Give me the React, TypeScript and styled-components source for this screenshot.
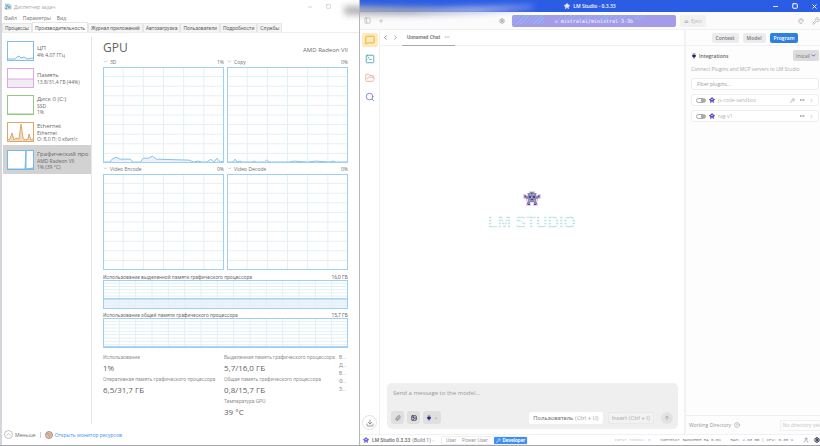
import React from "react";
import styled, { createGlobalStyle } from "styled-components";
import {
  ArrowUp,
  ChevronDown,
  ChevronLeft,
  ChevronRight,
  ChevronUp,
  CircleHelp,
  Download,
  Ellipsis,
  FolderOpen,
  Image as ImageIcon,
  MessageSquare,
  Minus,
  Palette,
  PanelLeft,
  Paperclip,
  Plug,
  Plus,
  Search,
  Settings,
  Square,
  SquareTerminal,
  User,
  Wrench,
  X,
} from "lucide-react";

const GlobalStyle = createGlobalStyle`
  * { box-sizing: border-box; }
  body { margin: 0; background: #fff; font-family: "Open Sans", "Noto Sans", sans-serif; }
  button, input { font-family: inherit; margin: 0; padding: 0; border: 0; background: none; color: inherit; }
  h1, h2, p, dl, dd, ul { margin: 0; padding: 0; font-weight: 400; }
  svg { display: block; flex: none; }
`;

const Desktop = styled.div`
  position: relative;
  display: grid;
  grid-template-columns: minmax(0, 359fr) minmax(0, 461fr);
  height: 100vh;
  overflow: hidden;
  border-bottom: 1px solid #a4a6ac;
`;

/* ---------- Task manager ---------- */

const TaskWindow = styled.section`
  display: flex;
  flex-direction: column;
  min-width: 0;
  border-left: 2px solid #d3d6da;
  color: #6e6e6e;
  font-size: 5px;
  line-height: 6px;
`;

const TaskTitle = styled.header`
  display: flex;
  align-items: center;
  gap: 2px;
  height: 13px;
  padding-left: 2px;
  color: #a5a5a5;
`;

const TaskWindowButtons = styled.div`
  display: flex;
  gap: 13px;
  margin-left: auto;
  padding-right: 28px;
`;

const MenuBar = styled.nav`
  display: flex;
  gap: 6px;
  height: 10px;
  padding-left: 2px;
  align-items: center;
`;

const PlainButton = styled.button`
  display: flex;
  align-items: center;
  gap: 2px;
  font-size: 5px;
  line-height: 6px;
`;

const TaskTabs = styled.div`
  display: flex;
  align-items: flex-end;
  height: 10px;
  border-bottom: 1px solid #ececec;
`;

const TaskTab = styled.button<{ $active?: boolean }>`
  height: ${(p) => (p.$active ? 10 : 9)}px;
  padding: 0 2px;
  border: 1px solid #e6e6e6;
  border-bottom: 0;
  background: ${(p) => (p.$active ? "#fff" : "#f4f4f4")};
  color: #606060;
  font-family: Roboto, sans-serif;
  font-size: 5px;
  line-height: 6px;
  white-space: nowrap;
`;

const TaskBody = styled.div`
  display: flex;
  flex: 1;
  min-height: 0;
`;

const DeviceList = styled.div`
  display: flex;
  flex-direction: column;
  flex: none;
  width: 90px;
  margin: 4px 0 0;
  border-right: 1px solid #e6e6e6;
`;

const DeviceRow = styled.button<{ $active?: boolean }>`
  display: flex;
  align-items: center;
  gap: 3px;
  height: ${(p) => (p.$active ? 29 : 27)}px;
  padding-left: 4px;
  margin-left: 1px;
  background: ${(p) => (p.$active ? "#d2d2d2" : "transparent")};
  color: #666;
  text-align: left;
  white-space: nowrap;
`;

const DeviceName = styled.div`
  font-size: 6px;
  line-height: 8px;
`;

const DeviceMeta = styled.div`
  font-size: 5px;
  line-height: 6px;
`;

const GpuPane = styled.main`
  flex: 1;
  min-width: 0;
  padding: 7px 11px 0 11px;
`;

const GpuHeader = styled.div`
  display: flex;
  justify-content: space-between;
  align-items: center;
  height: 16px;
`;

const GpuTitle = styled.h1`
  font-size: 12px;
  line-height: 16px;
  color: #626262;
`;

const GpuModel = styled.span`
  font-size: 6px;
  line-height: 8px;
  padding-top: 4px;
`;

const ChartGrid = styled.div`
  display: grid;
  grid-template-columns: 1fr 1fr;
  column-gap: 3px;
`;

const ChartLabel = styled.div`
  display: flex;
  justify-content: space-between;
  align-items: center;
  height: 11px;
  white-space: nowrap;
`;

const MemoryLabel = styled(ChartLabel)`
  height: 9px;
  padding-top: 2px;
  font-family: Roboto, sans-serif;
`;

const MemorySection = styled.div`
  padding-top: 1px;
`;

const ChartSvg = styled.svg<{ $height: number }>`
  width: 100%;
  height: ${(p) => p.$height}px;
`;

const Stats = styled.dl`
  display: grid;
  grid-template-columns: 117px 111px 1fr;
  column-gap: 4px;
  padding-top: 5px;
  white-space: nowrap;
`;

const StatColumn = styled.div`
  min-width: 0;
`;

const StatLabel = styled.dt`
  color: #929292;
  font-family: Roboto, sans-serif;
  line-height: 8px;
`;

const StatValue = styled.dd`
  font-size: 8px;
  line-height: 14px;
  color: #606060;
`;

const TaskFooter = styled.footer`
  display: flex;
  align-items: center;
  gap: 4px;
  height: 21px;
  padding-left: 2px;
`;

const Divider = styled.span`
  width: 1px;
  height: 6px;
  background: #ccc;
`;

const MonitorLink = styled.a`
  display: flex;
  align-items: center;
  gap: 2px;
  color: #3e8ef0;
  text-decoration: none;
`;

interface ChartProps {
  height: number;
  cols: number;
  rows: number;
  color?: string;
  line?: string;
  area?: string;
  fill?: string;
}

function Chart({ height, cols, rows, color = "#9fd0f2", line, area, fill = "#edf3fa" }: ChartProps) {
  const xs = Array.from({ length: cols - 1 }, (_, i) => ((i + 1) * 120) / cols);
  const ys = Array.from({ length: rows - 1 }, (_, i) => ((i + 1) * 100) / rows);
  return (
    <ChartSvg $height={height} viewBox="0 0 120 100" preserveAspectRatio="none" aria-hidden="true">
      <rect width="120" height="100" fill="#fff" />
      {area && <path d={area} fill={fill} />}
      <g stroke="#e3f0f6" strokeWidth="1">
        {xs.map((x) => <line key={`x${x}`} x1={x} x2={x} y1="0" y2="100" vectorEffect="non-scaling-stroke" />)}
        {ys.map((y) => <line key={`y${y}`} x1="0" x2="120" y1={y} y2={y} vectorEffect="non-scaling-stroke" />)}
      </g>
      {line && <path d={line} fill="none" stroke="#86c2ea" strokeWidth="1" vectorEffect="non-scaling-stroke" />}
      <rect width="120" height="100" fill="none" stroke={color} strokeWidth="2" vectorEffect="non-scaling-stroke" />
    </ChartSvg>
  );
}

const load3d =
  "M0 99 L7 99 L9 96 L13 94 L17 96 L27 96 L30 99 L37 99 L40 95 L45 95 L49 93 L53 96 L85 97 L90 99 L94 98 L98 99 L103 99 L107 96 L110 99 L113 95 L116 99 L120 98";
const loadCopy =
  "M0 99 L6 99 L8 96 L10 99 L13 98 L15 99 L25 99 L27 98 L29 99 L37 99 L39 97 L42 99 L62 99 L66 98 L80 99 L88 98 L102 99 L105 98 L108 99 L120 99";

interface Device {
  name: string;
  meta: string[];
  color: string;
  fill: string;
  path: string;
  active?: boolean;
}

const devices: Device[] = [
  { name: "ЦП", meta: ["4% 4,07 ГГц"], color: "#7fbfe8", fill: "#edf6fc", path: "M0 18 L8 18 L10 16 L12 15 L14 17 L17 16 L20 18 L26 17" },
  { name: "Память", meta: ["13,8/31,4 ГБ (44%)"], color: "#dfa5e8", fill: "#f0ecf1", path: "M0 11 L26 11" },
  { name: "Диск 0 (C:)", meta: ["SSD", "1%"], color: "#93c983", fill: "#eef7ea", path: "M0 19 L26 19" },
  {
    name: "Ethernet",
    meta: ["Ethernet", "О: 8,0 П: 0 кбит/с"],
    color: "#dca66f",
    fill: "#f3d9bd",
    path: "M0 18 L3 17 L5 11 L7 18 L9 16 L12 17 L14 2 L16 16 L18 18 L21 17 L22 12 L24 18 L26 17",
  },
  {
    name: "Графический про",
    meta: ["AMD Radeon VII", "1% (39 °C)"],
    color: "#74b8e8",
    fill: "#9fcdf0",
    path: "M0 19 L18 19 L19 1 L19 19 L26 18",
    active: true,
  },
];

function Thumb({ color, fill, path }: Device) {
  return (
    <svg width="27" height="20" viewBox="0 0 27 20" aria-hidden="true">
      <rect width="27" height="20" fill="#fff" />
      <path d={`${path} V20 H0 Z`} fill={fill} />
      <path d={path} fill="none" stroke={color} />
      <rect x=".5" y=".5" width="26" height="19" fill="none" stroke={color} />
    </svg>
  );
}

const taskTabs = ["Процессы", "Производительность", "Журнал приложений", "Автозагрузка", "Пользователи", "Подробности", "Службы"];

function GaugeIcon() {
  return (
    <svg width="8" height="8" viewBox="0 0 16 16" aria-hidden="true">
      <circle cx="8" cy="8" r="7" fill="#e7c3ad" stroke="#8d7a78" strokeWidth="1.5" />
      <path d="M3 4 L10 12 M7 4 L12 9" stroke="#b0796a" strokeWidth="1.5" />
    </svg>
  );
}

function TaskManagerIcon() {
  return (
    <svg width="8" height="7" viewBox="0 0 16 14" aria-hidden="true">
      <path d="M2 2h9l3 3v7H5z" fill="#b8dcea" stroke="#8daab8" />
      <path d="M4 9l3-5 3 6 3-4" fill="none" stroke="#4e93b8" strokeWidth="1.5" />
      <path d="M1 10l5 3" stroke="#878787" strokeWidth="2" />
    </svg>
  );
}

function EngineLabel({ name, value }: { name: string; value: string }) {
  return (
    <ChartLabel>
      <PlainButton><ChevronDown size={5} color="#888" />{name}</PlainButton>
      <span>{value}</span>
    </ChartLabel>
  );
}

function TaskManager() {
  return (
    <TaskWindow>
      <TaskTitle>
        <TaskManagerIcon />
        <span>Диспетчер задач</span>
        <TaskWindowButtons>
          <button aria-label="Свернуть"><Minus size={6} /></button>
          <button aria-label="Развернуть"><Square size={5} /></button>
        </TaskWindowButtons>
      </TaskTitle>
      <MenuBar>
        <PlainButton>Файл</PlainButton>
        <PlainButton>Параметры</PlainButton>
        <PlainButton>Вид</PlainButton>
      </MenuBar>
      <TaskTabs>
        {taskTabs.map((t, i) => <TaskTab key={t} $active={i === 1}>{t}</TaskTab>)}
      </TaskTabs>
      <TaskBody>
        <DeviceList>
          {devices.map((d) => (
            <DeviceRow key={d.name} $active={d.active}>
              <Thumb {...d} />
              <div>
                <DeviceName>{d.name}</DeviceName>
                {d.meta.map((m) => <DeviceMeta key={m}>{m}</DeviceMeta>)}
              </div>
            </DeviceRow>
          ))}
        </DeviceList>
        <GpuPane>
          <GpuHeader>
            <GpuTitle>GPU</GpuTitle>
            <GpuModel>AMD Radeon VII</GpuModel>
          </GpuHeader>
          <ChartGrid>
            <div>
              <EngineLabel name="3D" value="1%" />
              <Chart height={96} cols={6} rows={10} line={load3d} area={`${load3d} V100 H0 Z`} />
            </div>
            <div>
              <EngineLabel name="Copy" value="0%" />
              <Chart height={96} cols={6} rows={10} line={loadCopy} area={`${loadCopy} V100 H0 Z`} />
            </div>
            <div>
              <EngineLabel name="Video Encode" value="0%" />
              <Chart height={96} cols={6} rows={10} />
            </div>
            <div>
              <EngineLabel name="Video Decode" value="0%" />
              <Chart height={96} cols={6} rows={10} />
            </div>
          </ChartGrid>
          <MemorySection>
            <MemoryLabel><span>Использование выделенной памяти графического процессора</span><span>16,0 ГБ</span></MemoryLabel>
            <Chart height={29} cols={15} rows={9} line="M0 65 H120" area="M0 65 H120 V100 H0 Z" />
            <MemoryLabel><span>Использование общей памяти графического процессора</span><span>15,7 ГБ</span></MemoryLabel>
            <Chart height={30} cols={15} rows={9} line="M0 96 H120" />
          </MemorySection>
          <Stats>
            <StatColumn>
              <StatLabel>Использование</StatLabel>
              <StatValue>1%</StatValue>
              <StatLabel>Оперативная память графического процессора</StatLabel>
              <StatValue>6,5/31,7 ГБ</StatValue>
            </StatColumn>
            <StatColumn>
              <StatLabel>Выделенная память графического процессора</StatLabel>
              <StatValue>5,7/16,0 ГБ</StatValue>
              <StatLabel>Общая память графического процессора</StatLabel>
              <StatValue>0,8/15,7 ГБ</StatValue>
              <StatLabel>Температура GPU</StatLabel>
              <StatValue>39 °C</StatValue>
            </StatColumn>
            <StatColumn>
              {["В...", "Д...", "В...", "Ф...", "З..."].map((t, i) => <StatLabel key={i}>{t}</StatLabel>)}
            </StatColumn>
          </Stats>
        </GpuPane>
      </TaskBody>
      <TaskFooter>
        <PlainButton>
          <svg width="9" height="9" viewBox="0 0 18 18" fill="none" stroke="#888" aria-hidden="true">
            <circle cx="9" cy="9" r="8" /><path d="M5 11l4-4 4 4" />
          </svg>
          Меньше
        </PlainButton>
        <Divider />
        <MonitorLink href="#"><GaugeIcon />Открыть монитор ресурсов</MonitorLink>
      </TaskFooter>
    </TaskWindow>
  );
}

/* ---------- LM Studio ---------- */

const StudioWindow = styled.section`
  display: flex;
  flex-direction: column;
  min-width: 0;
  border-left: 1px solid #b5b6bb;
  font-size: 5px;
  line-height: 6px;
  color: #777;
`;

const StudioTitle = styled.header`
  display: grid;
  grid-template-columns: 1fr auto 1fr;
  align-items: center;
  height: 12px;
  background: #2b5de4;
  color: #fff;
  font-weight: 600;
`;

const TitleName = styled.div`
  display: flex;
  align-items: center;
  gap: 3px;
`;

const WindowControls = styled.div`
  display: flex;
  justify-content: flex-end;
  gap: 13px;
  padding-right: 2px;
`;

const Toolbar = styled.div`
  display: flex;
  align-items: center;
  height: 18px;
  padding-left: 4px;
  background: #fbfbfb;
  border-bottom: 1px solid #f0f0f0;
  color: #aaa;
`;

const IconGroup = styled.div<{ $gap?: number; $push?: boolean }>`
  display: flex;
  align-items: center;
  gap: ${(p) => p.$gap ?? 4}px;
  margin-left: ${(p) => (p.$push ? "auto" : "0")};
`;

const ToolbarEnd = styled.div`
  display: flex;
  flex: 0 0 25%;
  align-items: center;
  justify-content: flex-end;
  gap: 8px;
`;

const ModelPicker = styled.button`
  flex: 0 0 36%;
  height: 12px;
  margin: 0 4px 0 7px;
  border-radius: 2px;
  background:
    repeating-linear-gradient(135deg, #8fb4ef 0 1px, transparent 1px 3px) 0 0 / 32px 9px no-repeat,
    repeating-linear-gradient(135deg, #93b2ee 0 1px, transparent 1px 3px) 46px 0 / 88px 5px no-repeat,
    #a59ce9;
  color: #fff;
  font: 5px/6px "DejaVu Sans Mono", monospace;
`;

const EjectButton = styled.button`
  display: flex;
  align-items: center;
  justify-content: center;
  gap: 2px;
  width: 26px;
  height: 12px;
  border-radius: 2px;
  background: #f1f1f1;
  color: #bbb;
  font-size: 5px;
`;

const StudioBody = styled.div`
  display: flex;
  flex: 1;
  min-height: 0;
`;

const Rail = styled.nav`
  display: flex;
  flex-direction: column;
  align-items: center;
  gap: 5px;
  width: 20px;
  padding: 3px 0 4px;
  border-right: 1px solid #efefef;
`;

const RailButton = styled.button<{ $active?: boolean }>`
  display: flex;
  align-items: center;
  justify-content: center;
  width: 16px;
  height: 14px;
  border-radius: 2px;
  background: ${(p) => (p.$active ? "#fdeabb" : "transparent")};
`;

const DownloadButton = styled.button`
  display: flex;
  align-items: center;
  justify-content: center;
  width: 15px;
  height: 15px;
  margin-top: auto;
  border: 1px solid #e2e2e2;
  border-radius: 50%;
  color: #666;
`;

const ChatPane = styled.main`
  display: flex;
  flex-direction: column;
  flex: 1;
  min-width: 0;
`;

const ChatTabs = styled.div`
  display: flex;
  align-items: center;
  gap: 3px;
  height: 16px;
  padding-left: 2px;
  border-bottom: 1px solid #f1f1f1;
  color: #777;
`;

const ChatTab = styled.button`
  display: flex;
  align-items: center;
  gap: 4px;
  height: 16px;
  padding: 0 5px;
  border-bottom: 1px solid #aaa;
  font-family: Roboto, sans-serif;
  font-size: 5px;
  font-weight: 600;
`;

const Hero = styled.div`
  display: flex;
  flex: 1;
  flex-direction: column;
  align-items: center;
  justify-content: center;
  gap: 8px;
  padding-bottom: 6px;
`;

const Wordmark = styled.div`
  font: 700 16px/18px "Liberation Sans", sans-serif;
  color: transparent;
  background: repeating-linear-gradient(180deg, #bfe0e6 0 1px, #eff8f9 1px 3px);
  background-clip: text;
`;

const Composer = styled.form`
  margin: 0 6px 5px 7px;
  padding: 6px 4px 5px;
  height: 46px;
  display: flex;
  flex-direction: column;
  justify-content: space-between;
  border-radius: 5px;
  background: #efefef;
`;

const MessageInput = styled.input`
  width: 100%;
  padding-left: 2px;
  outline: 0;
  font-size: 6px;
  line-height: 8px;
  &::placeholder { color: #999; opacity: 1; }
`;

const ComposerActions = styled.div`
  display: flex;
  align-items: center;
  gap: 3px;
`;

const ToolButton = styled.button`
  display: flex;
  align-items: center;
  justify-content: center;
  gap: 2px;
  min-width: 13px;
  height: 13px;
  padding: 0 3px;
  border-radius: 3px;
  background: #dfdfdf;
  color: #555;
`;

const RoleButton = styled.button<{ $muted?: boolean }>`
  height: 12px;
  padding: 0 3px;
  border: 1px solid ${(p) => (p.$muted ? "#e9e9e9" : "#fff")};
  border-radius: 2px;
  background: ${(p) => (p.$muted ? "#f2f2f2" : "#fff")};
  color: ${(p) => (p.$muted ? "#b3b3b3" : "#777")};
  font-family: Roboto, sans-serif;
  font-size: 6px;
  line-height: 8px;
  white-space: nowrap;
`;

const Shortcut = styled.span`
  color: #b0b0b0;
`;

const SendButton = styled.button`
  display: flex;
  align-items: center;
  justify-content: center;
  width: 12px;
  height: 12px;
  margin: 0 1px 0 2px;
  border-radius: 50%;
  background: #e2e2e2;
  color: #888;
`;

const SidePanel = styled.aside`
  display: flex;
  flex-direction: column;
  width: 30%;
  max-width: 136px;
  border-left: 2px solid #f2f2f2;
  background: #fdfdfd;
`;

const PanelTabs = styled.div`
  display: flex;
  align-items: center;
  justify-content: center;
  gap: 4px;
  height: 16px;
  padding-left: 4px;
  border-bottom: 1px solid #f2f2f2;
`;

const PanelTab = styled.button<{ $active?: boolean }>`
  height: 10px;
  padding: 0 4px;
  border-radius: 2px;
  background: ${(p) => (p.$active ? "#2e80df" : "#ececee")};
  color: ${(p) => (p.$active ? "#fff" : "#777")};
  font-size: 5px;
  line-height: 6px;
  font-weight: 600;
`;

const PanelContent = styled.div`
  display: flex;
  flex-direction: column;
  gap: 4px;
  padding: 4px 1px 0 5px;
`;

const PanelHeading = styled.div`
  display: flex;
  align-items: center;
  gap: 2px;
  color: #666;
`;

const Heading = styled.h2`
  font-size: 5px;
  line-height: 6px;
  font-weight: 600;
`;

const InstallButton = styled.button`
  display: flex;
  align-items: center;
  justify-content: space-between;
  width: 26px;
  height: 11px;
  margin-left: auto;
  padding: 0 3px;
  border-radius: 2px;
  background: #dcdcdc;
  color: #777;
  font-size: 5px;
`;

const PanelHint = styled.p`
  height: 9px;
  font-size: 5px;
  line-height: 9px;
  color: #aaa;
  white-space: nowrap;
`;

const FilterInput = styled.input`
  height: 12px;
  padding: 0 5px;
  border: 1px solid #ececec;
  border-radius: 3px;
  background: #fff;
  font-size: 5px;
  &::placeholder { color: #999; opacity: 1; }
`;

const PluginRow = styled.div`
  display: flex;
  align-items: center;
  gap: 4px;
  height: 12px;
  padding: 0 4px;
  border: 1px solid #efefef;
  border-radius: 3px;
  background: #fff;
  color: #b5b5b5;
`;

const PluginLabel = styled.label`
  display: flex;
  align-items: center;
  gap: 3px;
`;

const Toggle = styled.input`
  appearance: none;
  width: 10px;
  height: 5px;
  border: 1px solid #a9a9a9;
  border-radius: 3px;
  background: linear-gradient(90deg, #fff 50%, #a9a9a9 50%);
  &:checked { background: #2e80df; }
`;

const DirectoryBar = styled.div`
  display: flex;
  align-items: center;
  gap: 3px;
  height: 19px;
  margin-top: auto;
  padding-left: 3px;
  border-top: 1px solid #efefef;
  color: #999;
  white-space: nowrap;
`;

const DirectoryButton = styled.button`
  height: 11px;
  margin-left: auto;
  padding-left: 2px;
  border: 1px solid #f0f0f0;
  border-right: 0;
  color: #c4c4c4;
  font-size: 5px;
`;

const StatusBar = styled.footer`
  display: flex;
  align-items: center;
  height: 11px;
  padding: 0 0 0 3px;
  border-top: 1px solid #f1f1f1;
  font-family: Roboto, sans-serif;
  white-space: nowrap;
`;

const VersionName = styled.strong`
  margin: 0 2px 0 3px;
  font-weight: 600;
`;

const ModeGroup = styled.div`
  display: flex;
  align-items: center;
  gap: 6px;
  margin-left: 5px;
  padding-left: 4px;
  border: 1px solid #efefef;
  border-radius: 2px;
`;

const ModeButton = styled.button<{ $active?: boolean }>`
  height: 7px;
  padding: 0 ${(p) => (p.$active ? 2 : 0)}px;
  display: flex;
  align-items: center;
  gap: 2px;
  border-radius: 1px;
  background: ${(p) => (p.$active ? "#3b8ff2" : "transparent")};
  color: ${(p) => (p.$active ? "#fff" : "#999")};
  font-size: 5px;
  line-height: 6px;
  font-weight: ${(p) => (p.$active ? 600 : 400)};
`;

const StatusMetrics = styled.div`
  display: flex;
  align-items: center;
  gap: 10px;
  margin-left: auto;
  font-family: "Liberation Mono", monospace;
  font-size: 4px;
  color: #777;
`;

const FaintMetric = styled.span`
  color: #c4c4c4;
`;

const DragBlur = styled.div`
  position: absolute;
  inset: 0;
  filter: blur(3px);
  pointer-events: none;
`;

const DragShadow = styled.div`
  width: 23%;
  height: 9px;
  margin: 6px 0 0 42%;
  background: linear-gradient(90deg, #b4b5b8, #a3a8ba 35%, #b9bfe0 65%, #b8b8f2);
  clip-path: polygon(0 0, 50% 20%, 100% 0, 100% 20%, 70% 80%, 35% 100%, 0 100%);
`;

function RobotIcon({ size = 6, color = "#6a4fc0" }: { size?: number; color?: string }) {
  return (
    <svg width={size} height={size} viewBox="0 0 18 16" fill={color} aria-hidden="true">
      <path d="M7 0h4v2h2v2h3v2h2v3h-3v2h-1v2h1v3h-4v-3H7v3H3v-3h1v-2H3V9H0V6h2V4h3V2h2z" />
      <path d="M6 5h2v2H6zM10 5h2v2h-2z" fill="#fff" />
    </svg>
  );
}

function MascotIcon() {
  return (
    <svg width="18" height="15" viewBox="0 0 18 15" shapeRendering="crispEdges" aria-hidden="true">
      <path d="M6 0h6v2h2v2h1V3h3v5h-3v3h-1v1h1v3h-5v-3H8v3H3v-3h1v-1H3V8H0V3h3v1h1V2h2z" fill="#f0cdf2" />
      <path d="M7 1h4v1h2v3h2V4h2v3h-2v1h-2v3h1v3h-3v-3H7v3H4v-3h1V8H3V7H1V4h2v1h2V2h2z" fill="#8d8bab" />
      <path d="M6 5h2v2H6zM10 5h2v2h-2zM8 8h2v1H8zM5 13h2v1H5zM11 13h2v1h-2zM2 5h1v1H2zM15 5h1v1h-1zM8 2h1v1H8z" fill="#3d45a8" />
      <path d="M7 3h1v1H7zM10 3h1v1h-1zM8 6h1v1H8zM11 9h1v1h-1zM6 9h1v1H6z" fill="#b9b9cc" />
    </svg>
  );
}

function LmStudio() {
  return (
    <StudioWindow>
      <StudioTitle>
        <span />
        <TitleName><RobotIcon color="#e4dcff" />LM Studio - 0.3.33</TitleName>
        <WindowControls>
          <button aria-label="Minimize"><Minus size={7} strokeWidth={3} /></button>
          <button aria-label="Maximize"><Square size={6} strokeWidth={4} /></button>
          <button aria-label="Close"><X size={7} strokeWidth={3} /></button>
        </WindowControls>
      </StudioTitle>
      <Toolbar>
        <IconGroup $gap={7}>
          <button aria-label="Toggle sidebar"><PanelLeft size={7} /></button>
          <button aria-label="New chat"><Plus size={6} /></button>
        </IconGroup>
        <IconGroup $push>
          <button aria-label="Model settings"><Settings size={6} strokeWidth={4} /></button>
        </IconGroup>
        <ModelPicker>⌂ mistralai/ministral-3-3b</ModelPicker>
        <EjectButton>⏏ <span>Eject</span></EjectButton>
        <ToolbarEnd>
          <button aria-label="Theme"><Palette size={6} /></button>
          <button aria-label="Tools"><Wrench size={8} /></button>
        </ToolbarEnd>
      </Toolbar>
      <StudioBody>
        <Rail>
          <RailButton $active aria-label="Chat"><MessageSquare size={10} color="#e2a52a" /></RailButton>
          <RailButton aria-label="Developer"><SquareTerminal size={10} color="#3f9fae" /></RailButton>
          <RailButton aria-label="My models"><FolderOpen size={10} color="#f0a08c" /></RailButton>
          <RailButton aria-label="Discover"><Search size={10} color="#6c78d8" /></RailButton>
          <DownloadButton aria-label="Downloads"><Download size={8} /></DownloadButton>
        </Rail>
        <ChatPane>
          <ChatTabs>
            <button aria-label="Back"><ChevronLeft size={7} strokeWidth={3} /></button>
            <button aria-label="Forward"><ChevronRight size={7} /></button>
            <ChatTab>Unnamed Chat <Ellipsis size={6} color="#aaa" /></ChatTab>
          </ChatTabs>
          <Hero>
            <MascotIcon />
            <Wordmark>LM STUDIO</Wordmark>
          </Hero>
          <Composer onSubmit={(e) => e.preventDefault()}>
            <MessageInput aria-label="Message" placeholder="Send a message to the model..." />
            <ComposerActions>
              <ToolButton type="button" aria-label="Attach"><Paperclip size={6} /></ToolButton>
              <ToolButton type="button" aria-label="Image"><ImageIcon size={6} color="#222a55" strokeWidth={3} /></ToolButton>
              <ToolButton type="button" aria-label="Plugins"><Plug size={6} color="#252a80" fill="#252a80" /><ChevronUp size={4} /></ToolButton>
              <IconGroup $gap={5} $push>
                <RoleButton type="button">Пользователь <Shortcut>(Ctrl + U)</Shortcut></RoleButton>
                <RoleButton type="button" $muted>Insert (Ctrl + I)</RoleButton>
                <SendButton aria-label="Send"><ArrowUp size={6} /></SendButton>
              </IconGroup>
            </ComposerActions>
          </Composer>
        </ChatPane>
        <SidePanel>
          <PanelTabs>
            <PanelTab>Context</PanelTab>
            <PanelTab>Model</PanelTab>
            <PanelTab $active>Program</PanelTab>
          </PanelTabs>
          <PanelContent>
            <PanelHeading>
              <Plug size={6} color="#222a66" fill="#222a66" />
              <Heading>Integrations</Heading>
              <InstallButton>Install <ChevronDown size={5} color="#46509c" strokeWidth={4} /></InstallButton>
            </PanelHeading>
            <PanelHint>Connect Plugins and MCP servers to LM Studio</PanelHint>
            <FilterInput aria-label="Filter plugins" placeholder="Filter plugins..." />
            <PluginRow>
              <PluginLabel><Toggle type="checkbox" /><RobotIcon />js-code-sandbox</PluginLabel>
              <IconGroup $push>
                <Wrench size={5} color="#888" /><Ellipsis size={6} color="#666" /><ChevronRight size={5} color="#888" />
              </IconGroup>
            </PluginRow>
            <PluginRow>
              <PluginLabel><Toggle type="checkbox" /><RobotIcon />rag-v1</PluginLabel>
              <IconGroup $push><Ellipsis size={6} color="#666" /><ChevronRight size={5} color="#888" /></IconGroup>
            </PluginRow>
          </PanelContent>
          <DirectoryBar>
            <span>Working Directory</span>
            <CircleHelp size={6} />
            <DirectoryButton>No directory yet</DirectoryButton>
          </DirectoryBar>
        </SidePanel>
      </StudioBody>
      <StatusBar>
        <RobotIcon color="#7068e0" />
        <VersionName>LM Studio 0.3.33</VersionName>
        <span>(Build 1)</span>
        <ChevronUp size={5} color="#bbb" />
        <ModeGroup>
          <ModeButton>User</ModeButton>
          <ModeButton>Power User</ModeButton>
          <ModeButton $active><Wrench size={5} />Developer</ModeButton>
        </ModeGroup>
        <StatusMetrics>
          <FaintMetric>INPUT TOKENS: 0</FaintMetric>
          <span>КОНТЕКСТ ЗАПОЛНЕН НА 0.0%</span>
          <span>RAM: 2.63 GB | CPU: 0.00 %</span>
          <IconGroup $gap={5}><User size={6} /><Settings size={6} color="#23264a" strokeWidth={4} /></IconGroup>
        </StatusMetrics>
      </StatusBar>
    </StudioWindow>
  );
}

export default function App() {
  return (
    <>
      <GlobalStyle />
      <Desktop>
        <TaskManager />
        <LmStudio />
        <DragBlur><DragShadow /></DragBlur>
      </Desktop>
    </>
  );
}
